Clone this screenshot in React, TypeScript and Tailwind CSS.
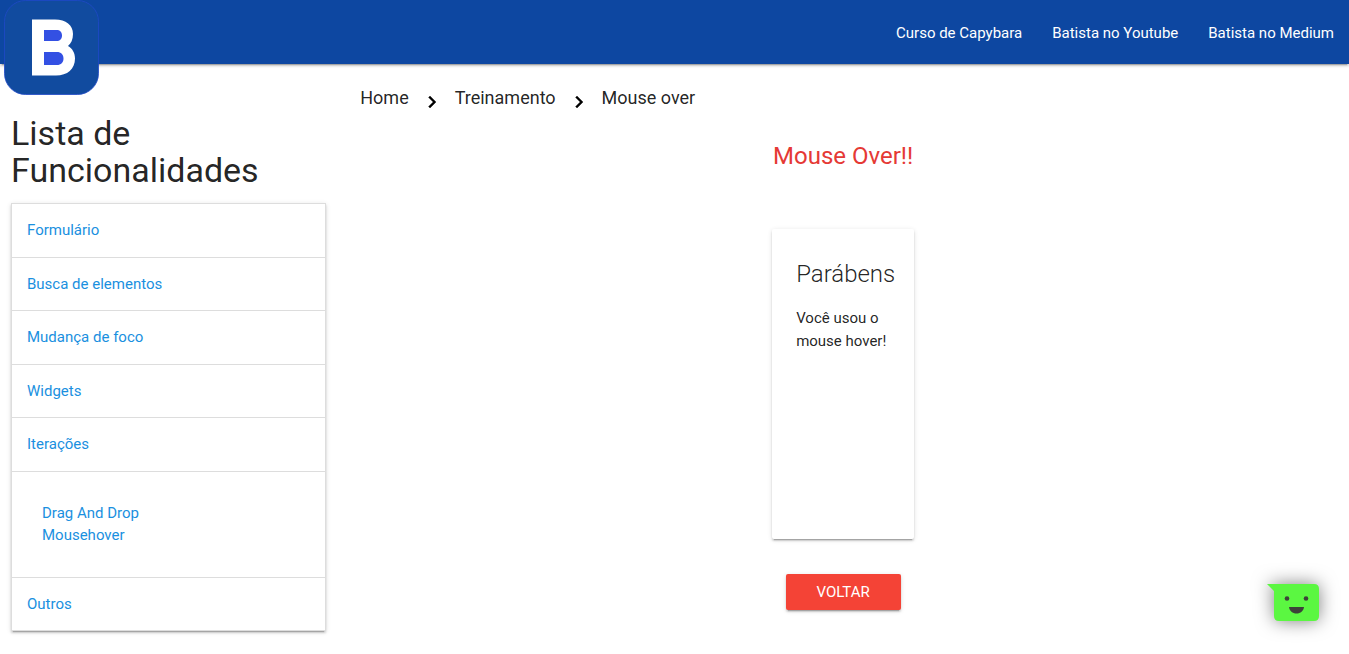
import React from 'react';

const depth =
  'shadow-[0_2px_2px_0_rgba(0,0,0,0.14),0_1px_5px_0_rgba(0,0,0,0.12),0_3px_1px_-2px_rgba(0,0,0,0.2)]';

const navLinks = ['Curso de Capybara', 'Batista no Youtube', 'Batista no Medium'];
const crumbs = ['Home', 'Treinamento', 'Mouse over'];
const features: { label: string; children?: string[] }[] = [
  { label: 'Formulário' },
  { label: 'Busca de elementos' },
  { label: 'Mudança de foco' },
  { label: 'Widgets' },
  { label: 'Iterações', children: ['Drag And Drop', 'Mousehover'] },
  { label: 'Outros' },
];

function Logo() {
  return (
    <svg viewBox="0 0 95 95" className="block size-[95px]" aria-hidden="true">
      <rect x="0.5" y="0.5" width="94" height="94" rx="21" fill="#114b9f" stroke="#1f49c8" strokeWidth="0.8" />
      <rect x="38" y="28" width="24" height="38" fill="#3350e3" />
      <path
        fill="#fff"
        fillRule="evenodd"
        d="M28 19.500H51C62 19.500 69 25 69 34C69 39.500 67 43.500 64 46C68.500 48.500 71 53 71 58.500C71 69 63.500 75.500 52 75.500H28ZM40 30V41H52.500C56 41 58 39 58 35.500C58 32 56 30 52.500 30ZM40 52V65H53C57 65 59.500 62.500 59.500 58.500C59.500 54.500 57 52 53 52Z"
      />
    </svg>
  );
}

function Chevron() {
  return (
    <svg viewBox="0 0 24 24" className="mt-[6px] size-6" aria-hidden="true">
      <path fill="#000" stroke="#000" strokeWidth="0.4" d="M10 6 8.590 7.410 13.170 12l-4.580 4.590L10 18l6-6z" />
    </svg>
  );
}

function ChatFace() {
  return (
    <svg
      viewBox="0 0 52 38"
      className="h-[38px] w-[52px] drop-shadow-[0_0_9px_rgba(0,0,0,0.5)]"
      aria-hidden="true"
    >
      <path fill="#5bf741" d="M0 0H47Q52 0 52 5V32Q52 37 47 37H12Q7 37 7 32V7Z" />
      <circle cx="20" cy="14.500" r="2.300" fill="#3d4239" />
      <circle cx="39" cy="14.500" r="2.300" fill="#3d4239" />
      <path fill="#3d4239" d="M22 23H37C36.500 27 33.500 29.500 29.500 29.500S22.500 27 22 23Z" />
    </svg>
  );
}

export default function App() {
  return (
    <div className="min-h-screen bg-white font-[Roboto,sans-serif] text-[15px] leading-normal font-normal text-black/87">
      <nav className={`relative flex h-16 items-start justify-end bg-[#0d47a1] ${depth}`}>
        <a href="#" aria-label="Batista" className="absolute top-0 left-1">
          <Logo />
        </a>
        <ul className="flex">
          {navLinks.map((label) => (
            <li key={label}>
              <a href="#" className="block px-[15px] leading-[66px] text-white">
                {label}
              </a>
            </li>
          ))}
        </ul>
      </nav>

      <div className="flex items-start">
        <aside className="w-1/4 shrink-0 px-[11px] pt-[51px]">
          <h4 className="text-[34px] leading-[37px]">Lista de Funcionalidades</h4>
          <ul className={`mt-[14px] border border-[#ddd] bg-white ${depth}`}>
            {features.map(({ label, children }) => (
              <li key={label} className="border-b border-[#ddd] last:border-b-0">
                <a href="#" className="block p-[15px] text-[#1a90e0]">
                  {label}
                </a>
                {children && (
                  <ul className="border-t border-[#ddd] p-[30px]">
                    {children.map((child) => (
                      <li key={child}>
                        <a href="#" className="text-[#1a90e0]">
                          {child}
                        </a>
                      </li>
                    ))}
                  </ul>
                )}
              </li>
            ))}
          </ul>
        </aside>

        <main className="min-w-0 grow px-[23px] pt-5">
          <div className="flex items-start gap-[11px] text-lg">
            {crumbs.map((crumb, i) => (
              <React.Fragment key={crumb}>
                {i > 0 && <Chevron />}
                <a href="#">{crumb}</a>
              </React.Fragment>
            ))}
          </div>
          <div className="flex flex-col items-center pt-[29px]">
            <h5 className="text-2xl leading-[26px] text-[#e53935]">Mouse Over!!</h5>
            <section className={`mt-[60px] h-[310px] w-[142px] rounded-xs px-6 pt-6 ${depth}`}>
              <h5 className="text-2xl leading-[42px] font-light">Parábens</h5>
              <p className="mt-3">Você usou o mouse hover!</p>
            </section>
            <button
              type="button"
              className={`mt-[35px] h-9 rounded-xs bg-[#f44336] px-[31px] text-center text-white uppercase ${depth}`}
            >
              Voltar
            </button>
          </div>
        </main>
      </div>

      <button type="button" aria-label="Chat" className="fixed right-[30px] bottom-8">
        <ChatFace />
      </button>
    </div>
  );
}
